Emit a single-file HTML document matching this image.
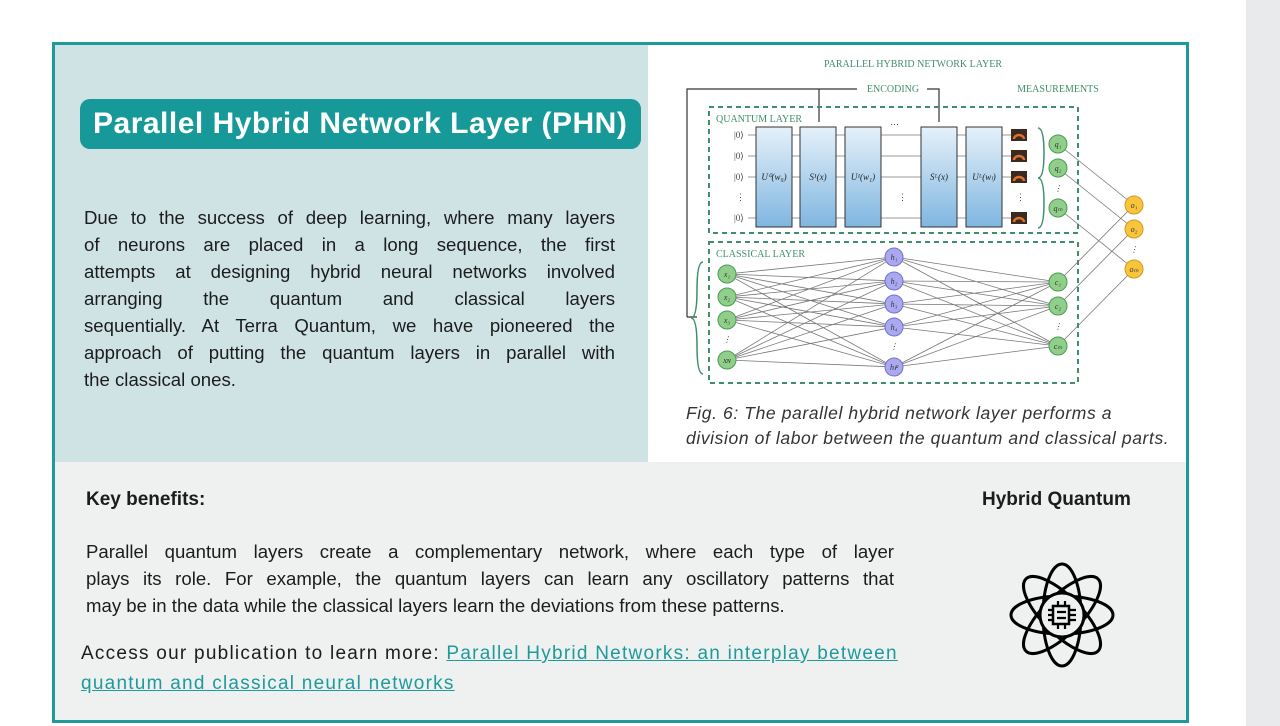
<!DOCTYPE html>
<html><head><meta charset="utf-8"><style>
*{margin:0;padding:0;box-sizing:border-box}
html,body{width:1280px;height:726px;overflow:hidden;background:#fff;font-family:"Liberation Sans",sans-serif;color:#1c1c1c}
.sb{position:absolute;left:1246px;top:0;width:34px;height:726px;background:#e9eaec}
.frame{position:absolute;left:52px;top:42px;width:1137px;height:681px;border:3px solid #1e9a9b;background:#eef1f0}
.lp{position:absolute;left:0;top:0;width:593px;height:417px;background:#cfe3e5}
.rp{position:absolute;left:593px;top:0;width:538px;height:417px;background:#fff}
.pill{position:absolute;left:25px;top:54px;width:561px;height:50px;background:#17999a;border-radius:10px;color:#fff;font-size:30px;font-weight:bold;letter-spacing:0.5px;line-height:50px;padding-left:13px;white-space:nowrap}
.j div{text-align:justify;text-align-last:justify;white-space:nowrap}
.j div.l{text-align-last:left}
.p1{position:absolute;left:29px;top:159px;width:531px;font-size:18.6px;line-height:27px}
.cap{position:absolute;left:631px;top:356px;width:520px;font-size:17.5px;line-height:25px;font-style:italic;color:#333;white-space:nowrap;letter-spacing:0.6px}
.kb{position:absolute;left:31px;top:444px;font-size:19px;font-weight:bold}
.hq{position:absolute;left:927px;top:444px;font-size:19px;font-weight:bold}
.p2{position:absolute;left:31px;top:493px;width:808px;font-size:18.6px;line-height:27px}
.p3{position:absolute;left:26px;top:594px;width:880px;font-size:19px;line-height:30px;letter-spacing:1.25px;white-space:nowrap}
.p3 a{color:#1e9a9b;text-decoration:underline}
svg{position:absolute;left:0;top:0}
</style></head><body>
<div class="sb"></div>
<div class="frame">
<div class="lp"></div><div class="rp"></div>
<div class="pill">Parallel Hybrid Network Layer (PHN)</div>
<div class="p1 j"><div>Due to the success of deep learning, where many layers</div><div>of neurons are placed in a long sequence, the first</div><div>attempts at designing hybrid neural networks involved</div><div>arranging the quantum and classical layers</div><div>sequentially. At Terra Quantum, we have pioneered the</div><div>approach of putting the quantum layers in parallel with</div><div class="l">the classical ones.</div></div>
<div class="cap">Fig. 6: The parallel hybrid network layer performs a<br>division of labor between the quantum and classical parts.</div>
<div class="kb">Key benefits:</div>
<div class="hq">Hybrid Quantum</div>
<div class="p2 j"><div>Parallel quantum layers create a complementary network, where each type of layer</div><div>plays its role. For example, the quantum layers can learn any oscillatory patterns that</div><div class="l">may be in the data while the classical layers learn the deviations from these patterns.</div></div>
<div class="p3">Access our publication to learn more: <a>Parallel Hybrid Networks: an interplay between</a><br><a>quantum and classical neural networks</a></div>
</div>
<svg width="1280" height="726" viewBox="0 0 1280 726" font-family="Liberation Serif,serif">
<defs><linearGradient id="g" x1="0" y1="0" x2="0" y2="1"><stop offset="0" stop-color="#e6f1fa"/><stop offset="1" stop-color="#7fb6e0"/></linearGradient></defs>
<g fill="#3f8f6a" font-size="10">
<text x="913" y="67" text-anchor="middle">PARALLEL HYBRID NETWORK LAYER</text>
<text x="893" y="92" text-anchor="middle">ENCODING</text>
<text x="1058" y="92" text-anchor="middle">MEASUREMENTS</text>
<text x="716" y="122">QUANTUM LAYER</text>
<text x="716" y="257">CLASSICAL LAYER</text>
</g>
<g stroke="#333" fill="none" stroke-width="1.2">
<path d="M857 89H819V122M927 89H939V122M687 317H697M687 317V89H819"/>
</g>
<g stroke="#3f8f6a" stroke-width="2" stroke-dasharray="5,4" fill="none">
<rect x="709" y="107" width="369" height="126"/><rect x="709" y="242" width="369" height="141"/>
</g>
<g stroke="#3f8f6a" stroke-width="1.5" fill="none"><path d="M1038 128q6 0 6 25q0 25 -6 25q6 0 6 25q0 25 -6 25"/><path d="M703 262q-6 0 -6 28q0 28 -6 28q6 0 6 28q0 28 6 28"/></g>
<g stroke="#999" stroke-width="1"><path d="M748 135H1011M748 156H1011M748 177H1011M748 218H1011"/></g>
<g font-size="9" fill="#444"><text x="734" y="138">|0⟩</text><text x="734" y="159">|0⟩</text><text x="734" y="180">|0⟩</text><text x="734" y="221">|0⟩</text><text x="736" y="200">⋮</text><text x="898" y="200">⋮</text><text x="1016" y="200">⋮</text><text x="890" y="127">⋯</text></g>
<g stroke="#333" fill="url(#g)"><rect x="756" y="127" width="36" height="100"/><rect x="800" y="127" width="36" height="100"/><rect x="845" y="127" width="36" height="100"/><rect x="921" y="127" width="36" height="100"/><rect x="966" y="127" width="36" height="100"/></g>
<g font-size="9" font-style="italic" fill="#222" text-anchor="middle"><text x="774" y="180">U⁰(w₀)</text><text x="818" y="180">S¹(x)</text><text x="863" y="180">U¹(w₁)</text><text x="939" y="180">Sᴸ(x)</text><text x="984" y="180">Uᴸ(wₗ)</text></g>
<g fill="#3a2a20"><rect x="1011" y="129" width="16" height="12"/><rect x="1011" y="150" width="16" height="12"/><rect x="1011" y="171" width="16" height="12"/><rect x="1011" y="212" width="16" height="12"/></g>
<g stroke="#e0702a" stroke-width="2.5" fill="none"><path d="M1014 139a5 4 0 0 1 10 0M1014 160a5 4 0 0 1 10 0M1014 181a5 4 0 0 1 10 0M1014 222a5 4 0 0 1 10 0"/></g>
<g stroke="#777" stroke-width="0.8">
<path d="M727 274L894 257M727 274L894 281M727 274L894 304M727 274L894 327M727 274L894 367M727 297L894 257M727 297L894 281M727 297L894 304M727 297L894 327M727 297L894 367M727 320L894 257M727 320L894 281M727 320L894 304M727 320L894 327M727 320L894 367M727 360L894 257M727 360L894 281M727 360L894 304M727 360L894 327M727 360L894 367"/>
<path d="M894 257L1058 282M894 257L1058 306M894 257L1058 346M894 281L1058 282M894 281L1058 306M894 281L1058 346M894 304L1058 282M894 304L1058 306M894 304L1058 346M894 327L1058 282M894 327L1058 306M894 327L1058 346M894 367L1058 282M894 367L1058 306M894 367L1058 346"/>
<path d="M1058 144L1134 205M1058 168L1134 229M1058 208L1134 269M1058 282L1134 205M1058 306L1134 229M1058 346L1134 269"/>
</g>
<g stroke="#4a9a55" fill="#8fcf8a"><circle cx="727" cy="274" r="9"/><circle cx="727" cy="297" r="9"/><circle cx="727" cy="320" r="9"/><circle cx="727" cy="360" r="9"/><circle cx="1058" cy="282" r="9"/><circle cx="1058" cy="306" r="9"/><circle cx="1058" cy="346" r="9"/><circle cx="1058" cy="144" r="9"/><circle cx="1058" cy="168" r="9"/><circle cx="1058" cy="208" r="9"/></g>
<g stroke="#7070c8" fill="#aaa8f0"><circle cx="894" cy="257" r="9"/><circle cx="894" cy="281" r="9"/><circle cx="894" cy="304" r="9"/><circle cx="894" cy="327" r="9"/><circle cx="894" cy="367" r="9"/></g>
<g stroke="#d09a20" fill="#f7c43c"><circle cx="1134" cy="205" r="9"/><circle cx="1134" cy="229" r="9"/><circle cx="1134" cy="269" r="9"/></g>
<g font-size="8" font-style="italic" fill="#333" text-anchor="middle">
<text x="727" y="277">x₁</text><text x="727" y="300">x₂</text><text x="727" y="323">x₃</text><text x="727" y="363">xɴ</text><text x="727" y="342">⋮</text>
<text x="894" y="260">h₁</text><text x="894" y="284">h₂</text><text x="894" y="307">h₃</text><text x="894" y="330">h₄</text><text x="894" y="370">hꜰ</text><text x="894" y="349">⋮</text>
<text x="1058" y="285">c₁</text><text x="1058" y="309">c₂</text><text x="1058" y="349">cₘ</text><text x="1058" y="329">⋮</text>
<text x="1058" y="147">q₁</text><text x="1058" y="171">q₂</text><text x="1058" y="211">qₘ</text><text x="1058" y="191">⋮</text>
<text x="1134" y="208">o₁</text><text x="1134" y="232">o₂</text><text x="1134" y="272">oₘ</text><text x="1134" y="252">⋮</text></g>
<g transform="translate(1062,615)" stroke="#000" stroke-width="3" fill="none">
<ellipse rx="51" ry="19"/><ellipse rx="51" ry="19" transform="rotate(45)"/><ellipse rx="51" ry="19" transform="rotate(90)"/><ellipse rx="51" ry="19" transform="rotate(135)"/>
<circle r="22" fill="#eef1f0"/>
<rect x="-9" y="-9" width="16" height="18" stroke-width="2.5"/>
<path d="M-5 -3H4M-5 3H4M-14 -5H-9M-14 0H-9M-14 5H-9M7 -5H14M7 0H14M7 5H14M-4 -9V-14M3 -9V-14M-4 9V14M3 9V14" stroke-width="2.2"/>
</g>
</svg>
</body></html>
